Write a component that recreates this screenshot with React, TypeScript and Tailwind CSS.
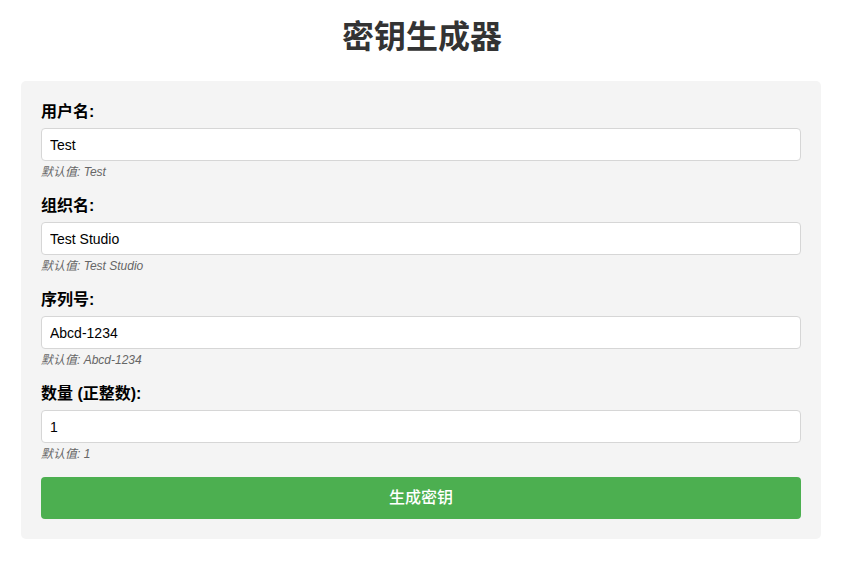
import React from "react";

const fields = [
  { label: "用户名:", value: "Test", hint: "默认值: Test" },
  { label: "组织名:", value: "Test Studio", hint: "默认值: Test Studio" },
  { label: "序列号:", value: "Abcd-1234", hint: "默认值: Abcd-1234" },
  { label: "数量 (正整数):", value: "1", hint: "默认值: 1" },
];

export default function App() {
  return (
    <div
      className="min-h-[585px] w-full bg-white"
      style={{ fontFamily: '"Liberation Sans", "Noto Sans CJK SC", sans-serif' }}
    >
      <h1 className="pt-[18px] mb-[25px] text-center text-[32px] leading-[38px] font-bold text-[#333]">
        密钥生成器
      </h1>
      <div className="ml-[21px] w-[800px] rounded-[5px] bg-[#f4f4f4] p-[20px]">
        {fields.map((f) => (
          <div key={f.label} className="mb-[14px]">
            <label className="mb-[5px] block text-[16px] leading-[22px] font-bold text-black">
              {f.label}
            </label>
            <input
              readOnly
              value={f.value}
              className="block h-[33px] w-full rounded-[4px] border border-[#d6d6d6] bg-white px-[8px] text-[14px] text-black outline-none"
            />
            <div className="mt-[3px] text-[12px] leading-[17px] italic text-[#666]">{f.hint}</div>
          </div>
        ))}
        <button className="flex h-[42px] w-full items-center justify-center rounded-[4px] bg-[#4caf50] text-[16px] font-medium text-white">
          生成密钥
        </button>
      </div>
    </div>
  );
}
